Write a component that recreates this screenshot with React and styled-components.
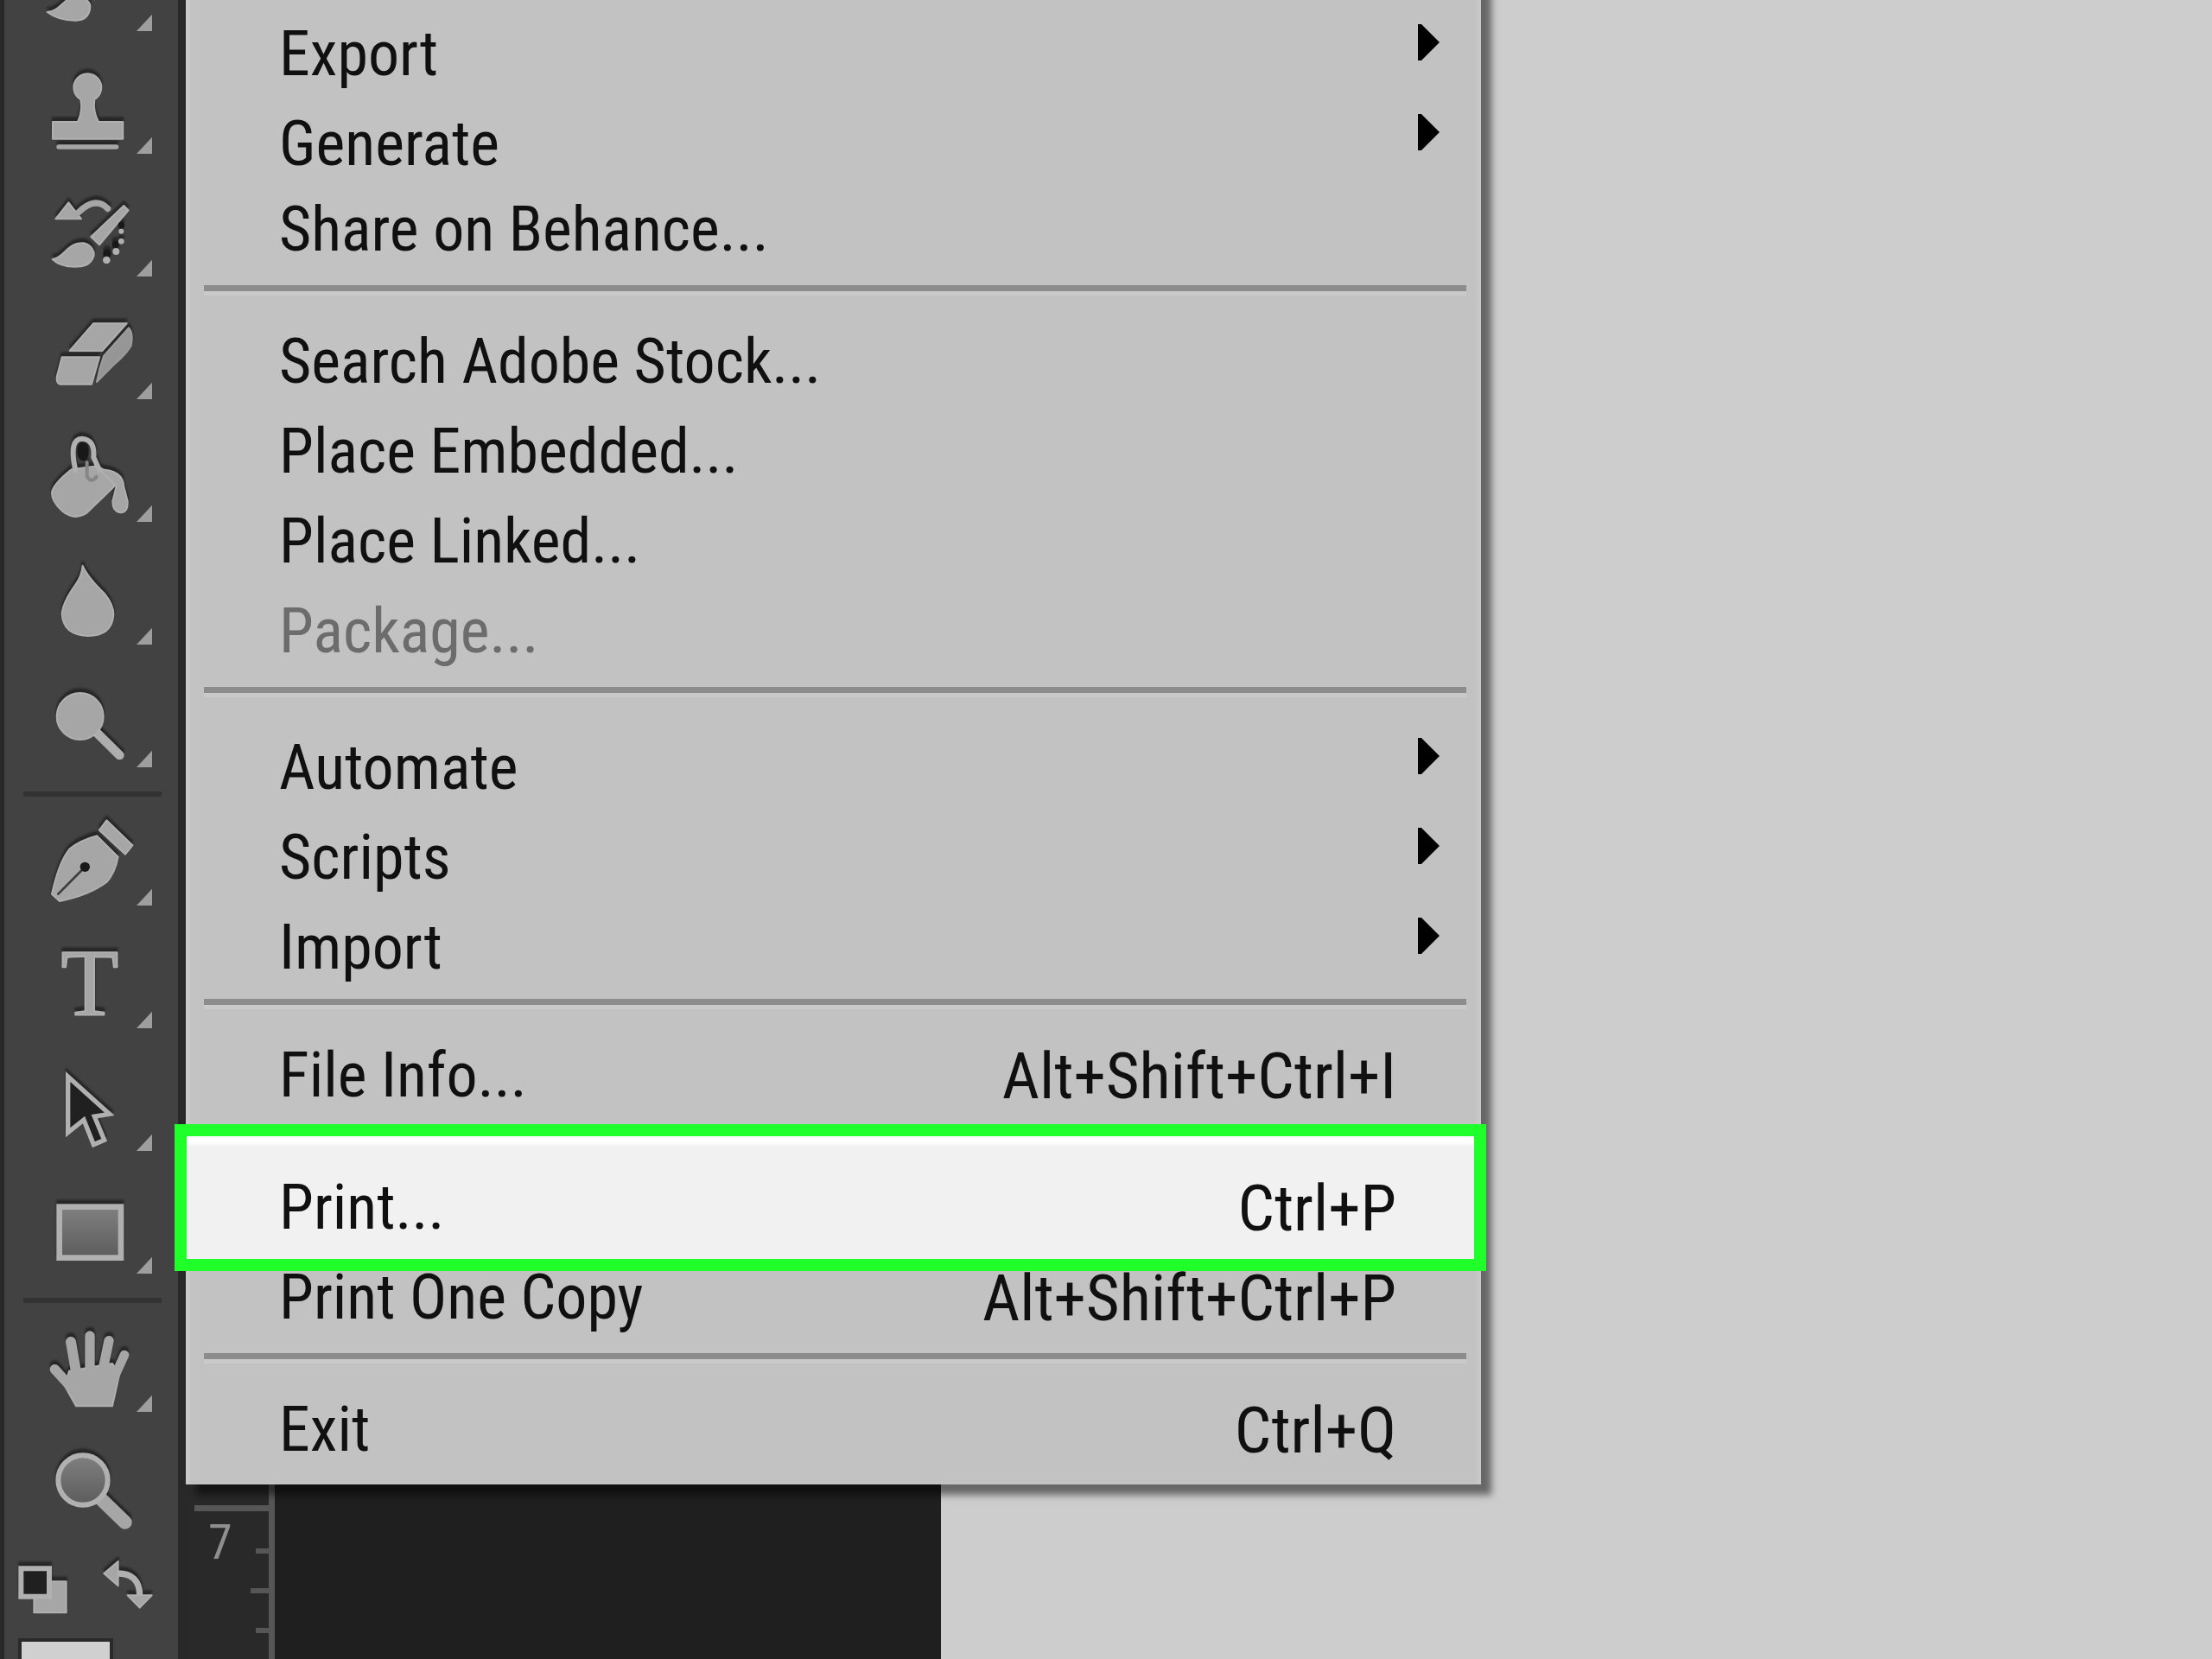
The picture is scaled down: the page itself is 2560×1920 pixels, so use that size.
import React from "react";
import styled, { createGlobalStyle, css } from "styled-components";

const color = {
  panel: "#424242",
  panelEdge: "#282828",
  divider: "#333333",
  glyph: "#a6a6a6",
  glyphEdge: "#b0b0b0",
  ink: "#181818",
  menu: "#c2c2c2",
  canvas: "#cdcdcd",
  highlight: "#1fff2a",
};

const GlobalStyle = createGlobalStyle`
  *, *::before, *::after { box-sizing: border-box; }
  body {
    margin: 0;
    background: ${color.canvas};
    font-family: "Roboto Condensed", Roboto, "Open Sans", sans-serif;
  }
  button { font: inherit; color: inherit; }
`;

const Screen = styled.div`
  position: relative;
  display: flex;
  height: 100vh;
  overflow: hidden;
`;

/* ---------- tool bar ---------- */

const Toolbar = styled.aside`
  flex: none;
  width: 215px;
  overflow: hidden;
  background: ${color.panel};
  border-left: 5px solid ${color.panelEdge};
  border-right: 9px solid ${color.panelEdge};
`;

const ToolList = styled.div`
  display: flex;
  flex-direction: column;
  margin-top: -78px;
`;

const ToolButton = styled.button`
  display: block;
  height: 142px;
  padding: 0;
  border: 0;
  background: none;
`;

const ToolIcon = styled.svg`
  display: block;
  width: 200px;
  height: 142px;
`;

const ToolDivider = styled.hr`
  width: 160px;
  height: 6px;
  margin: 0 0 12px 22px;
  border: 0;
  background: ${color.divider};
`;

const SwatchControls = styled.div`
  display: flex;
  gap: 38px;
  height: 92px;
  padding: 6px 0 0 15px;
`;

const SmallButton = styled.button`
  width: 60px;
  height: 56px;
  padding: 0;
  border: 0;
  background: none;
`;

const SmallIcon = styled.svg`
  display: block;
  width: 60px;
  height: 56px;
  overflow: visible;
`;

const ForegroundSwatch = styled.button`
  width: 110px;
  height: 110px;
  margin-left: 16px;
  padding: 0;
  border: 4px solid #2a2a2a;
  background: #d0d0d0;
`;

/* ---------- parts of the tool drawings ---------- */

const Glyph = styled.g`
  fill: ${color.glyph};
  stroke: ${color.glyphEdge};
  stroke-width: 6px;
  stroke-linejoin: round;
  stroke-linecap: round;
  filter: drop-shadow(0 -14px 3px #262626);
`;

const Stroke = styled.path`
  fill: none;
  stroke: ${(p) => p.$color || color.glyph};
  stroke-width: ${(p) => p.$width}px;
`;

const Ink = styled.g`
  fill: ${color.ink};
  stroke: none;
`;

const Dots = styled.g`
  fill: ${color.glyphEdge};
  stroke: none;
`;

const Shade = styled.path`
  fill: #969696;
  stroke: #9c9c9c;
`;

const OutlinedInk = styled.path`
  fill: #202020;
  stroke: ${color.glyphEdge};
  stroke-width: ${(p) => p.$width}px;
  stroke-linejoin: miter;
`;

const frame = css`
  fill: url(#shade);
  stroke: ${color.glyphEdge};
  stroke-width: ${(p) => p.$width}px;
  stroke-linejoin: miter;
`;

const FrameRect = styled.rect`${frame}`;
const Lens = styled.circle`${frame}`;

const TypeLetter = styled.text`
  font-family: "Liberation Serif", serif;
  font-size: 328px;
  text-anchor: middle;
`;

const toolGroups = [
  [
    {
      name: "Brush",
      top: -234,
      art: (
        <>
          <path d="M164 42C205 38 215 5 250-10 285-20 315 5 313 25 310 58 290 70 265 71 220 72 188 60 164 42Z" />
          <path d="M318-12L328-2 360-40 345-50Z" />
        </>
      ),
    },
    {
      name: "Clone Stamp",
      top: 192,
      art: (
        <>
          <path d="M183 423H270Q288 385 280 345A48 48 0 1 1 328 345Q322 385 342 423H427V482H183Z" />
          <Stroke $width={16} d="M204 510H404" />
        </>
      ),
    },
    {
      name: "History Brush",
      top: 618,
      art: (
        <>
          <path d="M193 760L238 703 282 760Z" />
          <Stroke $width={22} d="M272 738Q330 680 374 724" />
          <path d="M430 714L446 730 345 850 316 822Z" />
          <path d="M182 900C225 895 230 842 290 844 320 850 328 875 326 887 315 924 285 926 260 926 220 926 197 915 182 900Z" />
          <Ink>
            <circle cx="372" cy="880" r="14" />
            <circle cx="401" cy="848" r="12" />
            <circle cx="421" cy="781" r="11" />
          </Ink>
          <Dots>
            <circle cx="370" cy="903" r="13" />
            <circle cx="403" cy="873" r="12" />
            <circle cx="421" cy="838" r="10" />
            <circle cx="421" cy="803" r="9" />
          </Dots>
        </>
      ),
    },
    {
      name: "Eraser",
      top: 1044,
      art: (
        <>
          <path d="M324 1123H440L355 1218H242Z" />
          <path d="M215 1240H345L318 1334H208Q194 1330 198 1305Z" />
          <Shade d="M447 1138Q464 1155 455 1200 440 1228 400 1262L336 1326 346 1280 360 1236Z" />
        </>
      ),
    },
    {
      name: "Paint Bucket",
      top: 30,
      art: (
        <>
          <Ink>
            <ellipse cx="288" cy="128" rx="20" ry="32" />
          </Ink>
          <path d="M180 272Q182 242 248 190L340 178 410 225 400 245 300 342Q258 368 218 336 180 302 180 272Z" />
          <Stroke $width={18} $color="#b0b0b0" d="M262 192Q238 84 285 83 330 86 325 148L345 192" />
          <Stroke $width={12} $color="#868686" d="M302 165V215Q318 240 335 215" />
          <path d="M345 190Q428 192 430 250L443 300Q446 338 418 340 390 336 391 300L404 248Z" />
        </>
      ),
    },
    {
      name: "Blur",
      top: 456,
      art: (
        <path d="M287 524Q304 564 364 622 395 660 394 695 388 768 305 768 218 764 215 690 218 652 262 590 284 560 287 524Z" />
      ),
    },
    {
      name: "Dodge",
      top: 882,
      art: (
        <>
          <Stroke $width={32} $color="#aeaeae" d="M330 1098L415 1182" />
          <circle cx="278" cy="1047" r="81" />
        </>
      ),
    },
  ],
  [
    {
      name: "Pen",
      top: -18,
      art: (
        <>
          <path d="M370 28L460 115 435 146 345 62Z" />
          <path d="M337 82L410 155Q400 210 370 243 310 288 207 309L180 284Q205 170 242 127 280 97 337 82Z" />
          <Stroke $width={8} $color="#3c3c3c" d="M295 190L202 284" />
          <Ink>
            <circle cx="295" cy="190" r="17" />
          </Ink>
        </>
      ),
    },
    {
      name: "Type",
      top: 408,
      art: (
        <TypeLetter x="312" y="705">
          T
        </TypeLetter>
      ),
    },
    {
      name: "Path Selection",
      top: 834,
      art: <OutlinedInk $width={16} d="M236 918L380 1048 328 1056 362 1138 325 1154 291 1068 236 1112Z" />,
    },
    {
      name: "Rectangle",
      top: -60,
      art: <FrameRect $width={20} x="206" y="50" width="214" height="177" />,
    },
  ],
  [
    {
      name: "Hand",
      top: 420,
      art: (
        <>
          <path d="M240 620L390 594 415 630 390 742H264L225 672Z" />
          <Stroke $width={34} d="M190 614L285 718" />
          <Stroke $width={36} d="M246 519L268 646" />
          <Stroke $width={34} d="M312 498V630" />
          <Stroke $width={34} d="M378 515L352 640" />
          <Stroke $width={32} d="M432 564L388 661" />
        </>
      ),
    },
    {
      name: "Zoom",
      top: 846,
      plain: true,
      art: (
        <>
          <Stroke $width={48} d="M352 1066L434 1145" />
          <Lens $width={18} cx="288" cy="999" r="86" />
        </>
      ),
    },
  ],
];

function Tool({ tool }) {
  const base = tool.top + 342;
  return (
    <ToolButton type="button" aria-label={tool.name}>
      <ToolIcon viewBox={`15 ${tool.top} 600 426`} aria-hidden="true">
        <defs>
          <linearGradient id="shade" x1="0" y1="0" x2="0" y2="1">
            <stop offset="0" stopColor="#808080" />
            <stop offset="1" stopColor="#5c5c5c" />
          </linearGradient>
        </defs>
        <Glyph>{tool.art}</Glyph>
        {!tool.plain && <path d={`M528 ${base - 58}V${base}H474Z`} fill="#9e9e9e" />}
      </ToolIcon>
    </ToolButton>
  );
}

/* ---------- document area ---------- */

const Ruler = styled.div`
  flex: none;
  display: flex;
  flex-direction: column;
  justify-content: flex-end;
  width: 103px;
  background: #292929;
  border-right: 7px solid #565656;
`;

const RulerUnit = styled.div`
  display: flex;
  justify-content: space-between;
  height: 178px;
  margin-left: 10px;
  padding-left: 16px;
  border-top: 7px solid #565656;
`;

const RulerNumber = styled.span`
  font-size: 56px;
  line-height: 72px;
  color: #8f8f8f;
`;

const RulerTicks = styled.div`
  display: flex;
  flex-direction: column;
  align-items: flex-end;
  gap: 40px;
  padding-top: 43px;
`;

const RulerTick = styled.i`
  width: ${(p) => (p.$long ? 21 : 15)}px;
  height: 6px;
  background: #565656;
`;

const Pasteboard = styled.div`
  flex: none;
  width: 771px;
  background: #1f1f1f;
`;

const Artboard = styled.main`
  flex: 1;
  background: ${color.canvas};
`;

/* ---------- file menu ---------- */

const Menu = styled.div`
  position: absolute;
  top: -40px;
  left: 215px;
  width: 1499px;
  padding: 43px 0 14px;
  background: ${color.menu};
  box-shadow:
    inset -6px 0 4px -2px #cacaca,
    inset 6px 0 4px -2px #cacaca,
    12px 12px 8px rgba(0, 0, 0, 0.5);
`;

const Separator = styled.hr`
  height: 12px;
  margin: 15px 17px 22px 21px;
  border: 0;
  border-top: 7px solid #8c8c8c;
  background: #cacaca;
`;

const highlighted = css`
  z-index: 1;
  &::before {
    content: "";
    position: absolute;
    z-index: -1;
    inset: -42px -6px -24px -13px;
    border: 14px solid ${color.highlight};
    background: linear-gradient(#ffffff 7px, #f1f1f1 12px) padding-box;
  }
`;

const MenuItem = styled.button`
  position: relative;
  display: flex;
  justify-content: space-between;
  align-items: flex-start;
  width: 100%;
  height: 104px;
  padding: 3px 98px 0 108px;
  border: 0;
  background: none;
  color: #101010;
  font-size: 72px;
  line-height: 104px;
  white-space: nowrap;
  text-align: left;

  &:disabled { color: #6c6c6c; }
  ${(p) => p.$highlighted && highlighted}
`;

const Shortcut = styled.kbd`
  font-family: inherit;
  font-size: 75px;
`;

const SubmenuItem = styled(MenuItem)`
  padding: 8px 48px 0 108px;
`;

const SubmenuArrow = styled.svg`
  width: 25px;
  height: 42px;
  margin-top: 17px;
`;

const menuGroups = [
  [{ label: "Export", submenu: true }, { label: "Generate", submenu: true }, { label: "Share on Behance..." }],
  [
    { label: "Search Adobe Stock..." },
    { label: "Place Embedded..." },
    { label: "Place Linked..." },
    { label: "Package...", disabled: true },
  ],
  [
    { label: "Automate", submenu: true },
    { label: "Scripts", submenu: true },
    { label: "Import", submenu: true },
  ],
  [{ label: "File Info...", keys: "Alt+Shift+Ctrl+I" }],
  [
    { label: "Print...", keys: "Ctrl+P", highlighted: true },
    { label: "Print One Copy", keys: "Alt+Shift+Ctrl+P" },
  ],
  [{ label: "Exit", keys: "Ctrl+Q" }],
];

function MenuRow({ item }) {
  if (item.submenu) {
    return (
      <SubmenuItem type="button" role="menuitem" aria-haspopup="menu">
        <span>{item.label}</span>
        <SubmenuArrow viewBox="0 0 25 42" aria-hidden="true">
          <path d="M0 0H4L25 21 4 42H0Z" fill="#000" />
        </SubmenuArrow>
      </SubmenuItem>
    );
  }
  return (
    <MenuItem type="button" role="menuitem" disabled={item.disabled} $highlighted={item.highlighted}>
      <span>{item.label}</span>
      {item.keys && <Shortcut>{item.keys}</Shortcut>}
    </MenuItem>
  );
}

export default function App() {
  return (
    <Screen>
      <GlobalStyle />
      <Toolbar aria-label="Tools">
        <ToolList>
          {toolGroups.map((group, i) => (
            <React.Fragment key={group[0].name}>
              {i > 0 && <ToolDivider />}
              {group.map((tool) => (
                <Tool key={tool.name} tool={tool} />
              ))}
            </React.Fragment>
          ))}
        </ToolList>
        <SwatchControls>
          <SmallButton type="button" aria-label="Default colors">
            <SmallIcon viewBox="60 1296 180 168" aria-hidden="true">
              <Glyph>
                <rect x="118" y="1357" width="112" height="108" />
                <OutlinedInk $width={18} d="M73 1312H171V1409H73Z" />
              </Glyph>
            </SmallIcon>
          </SmallButton>
          <SmallButton type="button" aria-label="Swap colors">
            <SmallIcon viewBox="354 1296 180 168" aria-hidden="true">
              <Glyph>
                <Stroke $width={22} $color="#b0b0b0" d="M405 1329Q485 1327 485 1406" />
                <path d="M361 1329L410 1287V1372Z" />
                <path d="M443 1405H527L485 1448Z" />
              </Glyph>
            </SmallIcon>
          </SmallButton>
        </SwatchControls>
        <ForegroundSwatch type="button" aria-label="Foreground color" />
      </Toolbar>
      <Ruler>
        <RulerUnit>
          <RulerNumber>7</RulerNumber>
          <RulerTicks>
            <RulerTick />
            <RulerTick $long />
            <RulerTick />
          </RulerTicks>
        </RulerUnit>
      </Ruler>
      <Pasteboard />
      <Artboard />
      <Menu role="menu" aria-label="File">
        {menuGroups.map((group, i) => (
          <React.Fragment key={group[0].label}>
            {i > 0 && <Separator />}
            {group.map((item) => (
              <MenuRow key={item.label} item={item} />
            ))}
          </React.Fragment>
        ))}
      </Menu>
    </Screen>
  );
}
